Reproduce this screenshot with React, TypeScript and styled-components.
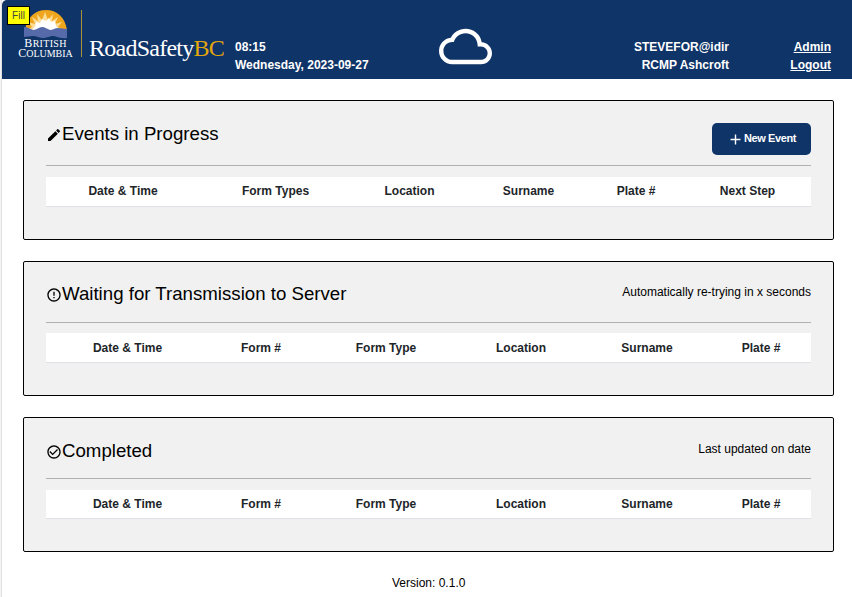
import React from "react";
import styled, { createGlobalStyle } from "styled-components";
import {
  MdAdd,
  MdCheckCircleOutline,
  MdCloudQueue,
  MdEdit,
  MdErrorOutline,
} from "react-icons/md";

const navy = "#0f3468";

const GlobalStyle = createGlobalStyle`
  * { box-sizing: border-box; }
  html, body { margin: 0; background: #fff; overflow: hidden; }
  body { font-family: "Liberation Sans", Arial, sans-serif; font-size: 12px; color: #000; }
`;

const Page = styled.div`
  height: 597px;
  margin-left: 1px;
  border-left: 1px solid #e1e1e1;
  box-shadow: -1px 0 0 #f4f4f4;
  display: flex;
  flex-direction: column;
`;

const Header = styled.header`
  position: relative;
  display: flex;
  height: 79px;
  flex: none;
  background: ${navy};
  border-top-left-radius: 5px;
  color: #fff;
  font-weight: 700;
  line-height: 18px;
`;

const FillBadge = styled.span`
  position: absolute;
  left: 5px;
  top: 6px;
  width: 23px;
  height: 19px;
  background: #ff0;
  border: 1px solid #000;
  color: #444;
  font-size: 10px;
  font-weight: 400;
  line-height: 17px;
  text-align: center;
`;

const Emblem = styled.div`
  width: 80px;
  padding: 10px 0 0 15px;
  flex: none;
`;

const EmblemText = styled.div<{ $spacing: string }>`
  width: 57px;
  height: 10px;
  font-family: "Liberation Serif", serif;
  font-size: 10px;
  font-weight: 400;
  line-height: 9px;
  letter-spacing: ${(p) => p.$spacing};
  text-align: center;
  text-transform: uppercase;
  white-space: nowrap;
  &::first-letter { font-size: 12px; }
`;

const SunSvg = styled.svg`
  display: block;
  width: 44px;
  height: 29px;
  margin-left: 7px;
`;

const Divider = styled.div`
  width: 1px;
  height: 47px;
  margin: 10px 7px 0 -1px;
  background: #ab9237;
  flex: none;
`;

const Wordmark = styled.div`
  width: 146px;
  padding-top: 34px;
  font-family: "Liberation Serif", serif;
  font-size: 24px;
  font-weight: 400;
  line-height: 28px;
  letter-spacing: -0.75px;
  white-space: nowrap;
`;

const Gold = styled.span`
  color: #e3a60c;
`;

const Clock = styled.div`
  width: 204px;
  padding-top: 38px;
`;

const CloudIcon = styled(MdCloudQueue)`
  width: 53px;
  height: 53px;
  margin-top: 20px;
`;

const Account = styled.div`
  margin-left: auto;
  width: 200px;
  padding-top: 38px;
  text-align: right;
`;

const Links = styled.nav`
  width: 123px;
  padding: 38px 21px 0 0;
  display: flex;
  flex-direction: column;
  align-items: flex-end;
`;

const NavLink = styled.a`
  color: inherit;
  text-decoration: underline;
`;

const Main = styled.main`
  padding: 21px 18px 0 21px;
  display: flex;
  flex-direction: column;
  gap: 21px;
`;

const Card = styled.section<{ $height: number }>`
  height: ${(p) => p.$height}px;
  padding: 0 22px;
  background: #f1f1f1;
  border: 1px solid #000;
  border-radius: 2px;
`;

const CardHead = styled.div<{ $height: number; $gap: number }>`
  height: ${(p) => p.$height}px;
  margin-bottom: ${(p) => p.$gap}px;
  display: flex;
  justify-content: space-between;
  align-items: flex-start;
  border-bottom: 1px solid #b1b1b1;
`;

const Title = styled.h3<{ $top: number }>`
  margin: ${(p) => p.$top}px 0 0;
  display: flex;
  align-items: flex-start;
  font-size: 18.66px;
  font-weight: 400;
  line-height: 22px;
  svg { width: 16px; height: 16px; margin-top: 4px; }
`;

const Note = styled.span<{ $top: number }>`
  margin-top: ${(p) => p.$top}px;
  line-height: 14px;
`;

const NewEvent = styled.button`
  width: 99px;
  height: 32px;
  margin-top: 22px;
  padding: 0 15px 2px 15px;
  display: flex;
  align-items: center;
  border: 0;
  border-radius: 5px;
  background: ${navy};
  color: #fff;
  font: 700 11px "Liberation Sans", Arial, sans-serif;
  letter-spacing: -0.4px;
  white-space: nowrap;
  svg { width: 17px; height: 17px; margin: 2px 0 0 0; flex: none; }
`;

const HeadRow = styled.div<{ $columns: string; $height: number; $line: number }>`
  display: grid;
  grid-template-columns: ${(p) => p.$columns};
  height: ${(p) => p.$height}px;
  background: #fff;
  border-bottom: 1px solid #dee2e6;
  color: #212529;
  font-weight: 700;
  line-height: ${(p) => p.$line}px;
  text-align: center;
`;

const Footer = styled.footer`
  padding: 24px 0 0 390px;
  line-height: 14px;
`;

const eventColumns = "154px 151px 117px 121px 94px 129px";
const formColumns = "163px 104px 146px 124px 128px 100px";
const eventHeads = ["Date & Time", "Form Types", "Location", "Surname", "Plate #", "Next Step"];
const formHeads = ["Date & Time", "Form #", "Form Type", "Location", "Surname", "Plate #"];

function SunMark() {
  return (
    <SunSvg viewBox="0 0 44 29">
      <path d="M1 20C3 7 11 0 22 0s19 7 21 20z" fill="#efa51c" />
      <path
        d="M3 20l5-3-4-5 7 2-3-7 6 4-1-7 5 6 3-8 3 8 5-6-1 7 6-4-3 7 7-2-4 5 5 3z"
        fill="#fbdc95"
      />
      <path d="M8 20l3-4 1-4 4 1 2-4 4 2 3-3 2 4 4-1 1 5 4 4z" fill="#fff" />
      <path
        d="M0 17c4 0 6 2 9 3 4 0 6-3 9-3s5 2 8 3c3 0 5-2 8-2s6 1 9 1v9c-5 1-9-1-13-2-5 0-7 2-11 2s-6-2-10-2-6 1-9 1z"
        fill="#5669a9"
      />
    </SunSvg>
  );
}

export default function App() {
  return (
    <>
      <GlobalStyle />
      <Page>
        <Header>
          <Emblem>
            <SunMark />
            <EmblemText $spacing="0.3px">British</EmblemText>
            <EmblemText $spacing="0">Columbia</EmblemText>
          </Emblem>
          <Divider />
          <Wordmark>RoadSafety<Gold>BC</Gold></Wordmark>
          <Clock>08:15<br />Wednesday, 2023-09-27</Clock>
          <CloudIcon />
          <Account>STEVEFOR@idir<br />RCMP Ashcroft</Account>
          <Links>
            <NavLink>Admin</NavLink>
            <NavLink>Logout</NavLink>
          </Links>
          <FillBadge>Fill</FillBadge>
        </Header>
        <Main>
          <Card $height={140}>
            <CardHead $height={65} $gap={11}>
              <Title $top={22}><MdEdit />Events in Progress</Title>
              <NewEvent><MdAdd />New Event</NewEvent>
            </CardHead>
            <HeadRow $columns={eventColumns} $height={30} $line={28}>
              {eventHeads.map((h) => <span key={h}>{h}</span>)}
            </HeadRow>
          </Card>
          <Card $height={135}>
            <CardHead $height={61} $gap={10}>
              <Title $top={21}><MdErrorOutline />Waiting for Transmission to Server</Title>
              <Note $top={23}>Automatically re-trying in x seconds</Note>
            </CardHead>
            <HeadRow $columns={formColumns} $height={30} $line={30}>
              {formHeads.map((h) => <span key={h}>{h}</span>)}
            </HeadRow>
          </Card>
          <Card $height={135}>
            <CardHead $height={61} $gap={11}>
              <Title $top={22}><MdCheckCircleOutline />Completed</Title>
              <Note $top={24}>Last updated on date</Note>
            </CardHead>
            <HeadRow $columns={formColumns} $height={29} $line={28}>
              {formHeads.map((h) => <span key={h}>{h}</span>)}
            </HeadRow>
          </Card>
        </Main>
        <Footer>Version: 0.1.0</Footer>
      </Page>
    </>
  );
}
